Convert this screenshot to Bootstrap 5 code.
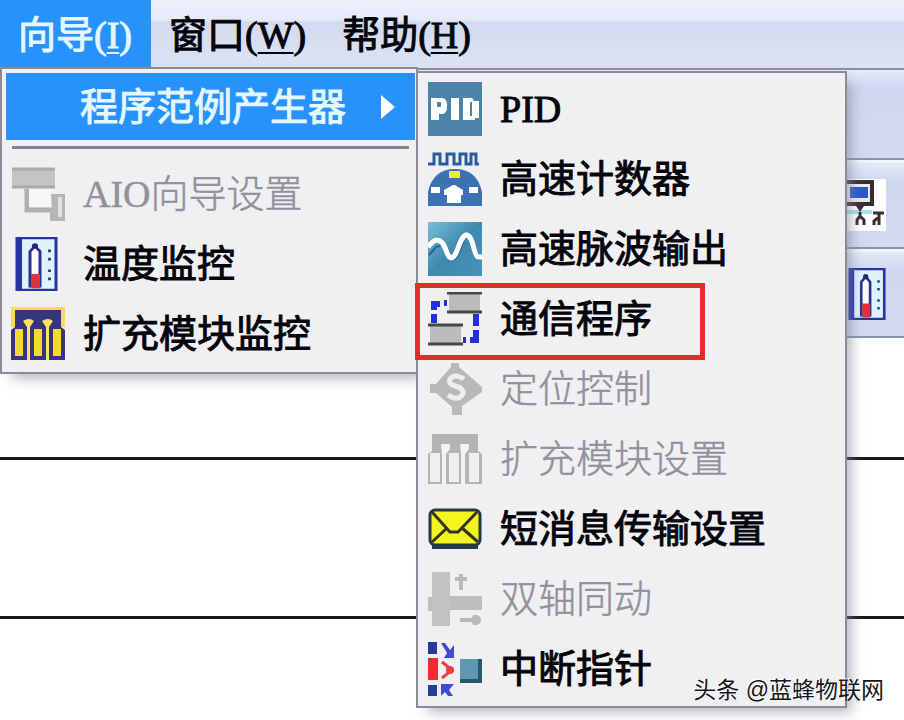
<!DOCTYPE html>
<html lang="zh-CN">
<head>
<meta charset="utf-8">
<meta name="viewport" content="width=device-width, initial-scale=1">
<title>向导</title>
<link href="https://cdn.jsdelivr.net/npm/bootstrap@5.3.0/dist/css/bootstrap.min.css" rel="stylesheet">
<style>
body{font-family:"Liberation Serif","Noto Sans CJK SC",serif;font-size:38px;line-height:72px;color:#05050c;background:#fff}
.menubar{height:70px;background:linear-gradient(#edf2fb 0,#e6eaf7 20px,#d3dbf0 22px,#dde3f5 100%);border-bottom:2px solid #8a90a0}
.bar-btn{border:0;background:none;color:inherit;padding:0 18px;height:67px;line-height:70px;-webkit-text-stroke:1px}
.bar-btn.active{background:#2791fc;color:#e4f6ff;padding-right:19px}
.bar-btn u{text-decoration-thickness:2px;text-underline-offset:4px}
.tool-row{height:90px;background:linear-gradient(#e4eafa 0,#cfd8f0 18px,#d3dbf1 100%);border-bottom:2px solid #8b94a6;padding-right:18px}
.tool-row+.tool-row{height:89px;border-top:3px solid #f0f4fc}
.rung{height:159px;border-bottom:3px solid #18181c}
.rung:first-child{height:122px}
.pop{background:#f0f0f2;border:2px solid #8b8b93;box-shadow:8px 8px 12px -4px #85859aa0}
.wizard-menu{left:0;top:67px;width:418px;padding:4px 1px 0 4px;height:307px}
.sub-menu{left:416px;top:71px;width:431px;padding:1px 10px 2px 10px}
.entry{border:0;background:none;color:inherit;height:70px;padding:0;gap:18px;width:100%;white-space:nowrap;text-align:left;-webkit-text-stroke:1px}
.entry:disabled{color:#92919b;-webkit-text-stroke:.5px;font-weight:300}
.entry svg{width:54px;height:54px;flex:none}
.wizard-menu .entry{padding-left:5px}
.wizard-menu .entry.active{height:67px;background:#2791fc;color:#e4f6ff;padding:0 20px 0 74px;margin-bottom:6px}
.entry.active svg{width:14px;height:24px}
.rule{height:3px;background:#85858b;margin:0 6px 10px}
.marked::after{content:"";position:absolute;left:-13px;top:-1px;width:290px;height:77px;border:5px solid #e62b28}
.credit{right:20px;bottom:12px;font:23px/36px "Liberation Sans","Noto Sans CJK SC",sans-serif;color:#16161a;text-shadow:-1px -1px #fff,-1px 0 #fff}
</style>
<script src="https://cdn.jsdelivr.net/npm/bootstrap@5.3.0/dist/js/bootstrap.bundle.min.js"></script>
</head>
<body>
<svg width="0" height="0" class="d-none">
<symbol id="thermo" viewBox="0 0 54 60"><path d="M6 1h39v58H6z" fill="#dff3fd" stroke="#2734a2" stroke-width="3"/><path d="M6 1h5v58H6z" fill="#2734a2"/><path d="M19 56V16l5-6 5 6v40" fill="#fff" stroke="#2a3190" stroke-width="3"/><path d="M20 41h9v16h-9z" fill="#dd3041"/><circle cx="24" cy="10" r="3" fill="#20286f"/><path d="M37 14h3v3h-3zm0 9h3v3h-3zm0 13h3v3h-3zm0 9h3v3h-3z" fill="#234d83"/></symbol>
</svg>
<div class="position-relative min-vh-100 overflow-hidden">
<nav class="menubar d-flex">
<button class="bar-btn active">向导(<u>I</u>)</button><button class="bar-btn">窗口(<u>W</u>)</button><button class="bar-btn">帮助(<u>H</u>)</button>
</nav>
<div>
<div class="tool-row"></div>
<div class="tool-row d-flex align-items-center justify-content-end"><svg width="40" height="52" viewBox="0 0 40 52"><path d="M0 0h40v52H0z" fill="#fff"/><path d="M-2 3h28v22H-2z" fill="#eceaf4" stroke="#3a2d32" stroke-width="4"/><path d="M4 8h18v11H4z" fill="#2859c7"/><path d="M0 33h26" stroke="#9fe6ee" stroke-width="4"/><path d="M10 27h8l-4 6z" fill="#3a2d32"/><path d="M11 46v-5l3-4 4 4v5M27 34h11M28 46v-4l5-4v8M33 35v4M14 33v4" fill="none" stroke="#3a2d32" stroke-width="3"/></svg></div>
<div class="tool-row d-flex align-items-center justify-content-end"><svg width="38" height="52" viewBox="4 0 43 60" preserveAspectRatio="none"><use href="#thermo" width="54" height="60"/></svg></div>
</div>
<main><div class="rung"></div><div class="rung"></div></main>

<div class="pop wizard-menu position-absolute">
<button class="entry active d-flex align-items-center justify-content-between">程序范例产生器<svg viewBox="0 0 14 24"><path d="M0 0l14 12L0 24z" fill="#fff"/></svg></button>
<div class="rule"></div>
<button class="entry d-flex align-items-center" disabled><svg viewBox="0 0 54 54"><path d="M1 1h43v20H1z" fill="#c4c4c6"/><path d="M1 2h43M1 20h43" stroke="#aaa" stroke-width="3"/><path d="M16 22v21h32" fill="none" stroke="#b0b0b2" stroke-width="5"/><path d="M18 22v18h22V22" fill="#f7f7f8"/><path d="M40 27h14v27H39V43h2z" fill="#b5b5b7"/><path d="M49 30v20" stroke="#e4e4e5" stroke-width="4"/></svg>AIO向导设置</button>
<button class="entry d-flex align-items-center"><svg viewBox="0 0 54 60" preserveAspectRatio="none"><use href="#thermo" width="54" height="60"/></svg>温度监控</button>
<button class="entry d-flex align-items-center"><svg viewBox="0 0 54 54"><path d="M0 0h54v20H0z" fill="#ffdb55"/><path d="M4 3h46v17l4 3v30H0V23l4-3z" fill="#35367d"/><path d="M12 14q6-4 11 0l-4 6v33h-3V20zM31 14q6-4 11 0l-4 6v33h-3V20z" fill="#ffe166"/><path d="M4 22h8v27H4zm19 0h8v27h-8zm19 0h8v27h-8z" fill="#f5da29"/></svg>扩充模块监控</button>
</div>

<div class="pop sub-menu position-absolute">
<button class="entry d-flex align-items-center"><svg viewBox="0 0 54 54"><path d="M0 0h54v54H0z" fill="#4b83a9"/><path d="M3 38V16h11q5 0 5 8t-5 8h-3v6zM23 16h8v22h-8zM35 16h9l2 3h5v17h-4v2H35z" fill="#fff"/><path d="M9 20h4v5H9zM42 20h2v14h-2z" fill="#4b83a9"/></svg>PID</button>
<button class="entry d-flex align-items-center"><svg viewBox="0 0 54 54"><path d="M0 12h6V2h6v10h7V2h7v10h6V2h6v10h5V2h5v10h3" fill="none" stroke="#285c9f" stroke-width="3"/><path d="M0 54V40Q5 17 27 17t27 23v14z" fill="#3d72b2"/><path d="M21 19h11v7H21z" fill="#eeee25"/><path d="M3 35h9v6H3zm38 0h9v6h-9zM19 51V43h-3v-5l9-5h2l8 5v5h-2v8z" fill="#fff"/></svg>高速计数器</button>
<button class="entry d-flex align-items-center"><svg viewBox="0 0 54 54"><defs><linearGradient id="sea" x2="1" y2="1"><stop stop-color="#79bfda"/><stop offset=".5" stop-color="#3f88ae"/><stop offset="1" stop-color="#4b91b9"/></linearGradient></defs><path d="M0 0h54v54H0z" fill="url(#sea)"/><path d="M1 33l7-8 6-2 8 15 6-2 8-17" fill="none" stroke="#276489" stroke-width="2"/><path d="M0 25Q9 13 15 22c4 6 4 13 8 14 7-1 8-21 15-23 8 0 7 20 12 22h4" fill="none" stroke="#fff" stroke-width="5"/></svg>高速脉波输出</button>
<button class="entry marked position-relative d-flex align-items-center"><svg viewBox="0 0 54 54"><path d="M21 1h31v19H21zM2 33h31v20H2z" fill="#bcbcbb"/><path d="M19 1h35M19 20h35M0 33h35M0 52h35" stroke="#494644" stroke-width="3"/><path d="M6 31V22M6 18v-6h6M16 11h3M48 22v12M48 38v10h-6M38 48h-3" fill="none" stroke="#242ee1" stroke-width="6"/></svg>通信程序</button>
<button class="entry d-flex align-items-center" disabled><svg viewBox="0 0 54 54"><path d="M2 22h6L23 5V1h8v4l23 20v5L34 44v9H24v-8L8 31H2z" fill="#b9b9bb"/><path d="M36 17q-9-6-14 0-2 5 5 7 9 2 8 8-5 8-15 1" fill="none" stroke="#eee" stroke-width="5"/></svg>定位控制</button>
<button class="entry d-flex align-items-center" disabled><svg viewBox="0 0 54 54"><path d="M4 2h46v17l4 3v30H0V22l4-3z" fill="#b4b4b6"/><path d="M13 12h9v5l-4 5v30h-4V22zM32 12h9v5l-4 5v30h-4V22z" fill="#f3f3f5"/><path d="M2 21h10v29H2zm19 0h10v29H21zm20 0h10v29H41z" fill="#efeff1"/></svg>扩充模块设置</button>
<button class="entry d-flex align-items-center"><svg viewBox="0 0 54 54"><path d="M4 42h46v5H4z" fill="#263e50"/><rect x="2" y="8" width="50" height="35" rx="5" fill="#f5f51e" stroke="#263745" stroke-width="3"/><path d="M4 10l18 20h8L49 10M4 40l15-14M50 40L34 26" fill="none" stroke="#333521" stroke-width="3"/></svg>短消息传输设置</button>
<button class="entry d-flex align-items-center" disabled><svg viewBox="0 0 54 54"><path d="M4 0h18v54H4z" fill="#c2c2c4"/><path d="M22 24h32v14H22zM0 25h4v14H0z" fill="#bebec0"/><path d="M33 2v16M27 7h12M32 48h20M47 43v10" fill="none" stroke="#b9b9bb" stroke-width="4"/><circle cx="48" cy="48" r="5" fill="#b9b9bb"/></svg>双轴同动</button>
<button class="entry d-flex align-items-center"><svg viewBox="0 0 54 54"><path d="M0 0h9v12H0zm0 43h9v11H0z" fill="#273b98"/><path d="M0 16h10v22H0z" fill="#ed2b32"/><path d="M14 20l10 8-10 8" fill="none" stroke="#ed3d3d" stroke-width="3"/><circle cx="22" cy="28" r="4" fill="#ed3d3d"/><path d="M13 1h4l5 7 4-5v13H16l3-5zM26 42l-5 6 4 6h-5l-3-4-4 4V42z" fill="#3e4bd3"/><path d="M32 17h22v24H32z" fill="#29576d"/><path d="M32 17h18v20H32z" fill="#5d98b1"/></svg>中断指针</button>
</div>
<div class="credit position-absolute">头条 @蓝蜂物联网</div>
</div>
</body>
</html>
